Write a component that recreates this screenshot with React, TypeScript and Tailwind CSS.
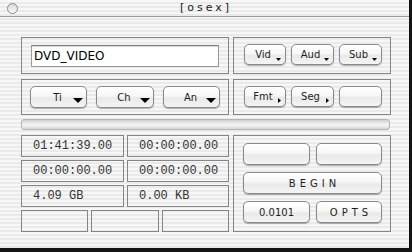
import React from 'react';

// aqua pinstripe + button skins
const stripes =
  'bg-[repeating-linear-gradient(180deg,#f7f7f7_0px,#f7f7f7_2px,#eaeaea_2px,#eaeaea_4px)]';
const btnSkin =
  'rounded-[5px] border border-[#8a8a8a] bg-[linear-gradient(180deg,#ffffff_0%,#f7f7f7_45%,#e9e9e9_55%,#f4f4f4_100%)] shadow-[0_1px_1px_rgba(0,0,0,0.3)]';
const label = "font-['DejaVu_Sans',sans-serif] text-[10px] text-[#1e1e1e]";

type Arrow = 'big' | 'down' | 'right' | 'none';

function AquaButton({
  text = '',
  arrow = 'none',
  className = '',
  textClass = '',
}: {
  text?: string;
  arrow?: Arrow;
  className?: string;
  textClass?: string;
}) {
  return (
    <div className={`relative flex items-center justify-center ${btnSkin} ${className}`}>
      <span className={`${label} ${textClass}`}>{text}</span>
      {arrow === 'big' && (
        <svg className="absolute right-[3px] bottom-[4px]" width="10" height="5" viewBox="0 0 10 5">
          <polygon points="0,0 10,0 5,5" fill="#000" />
        </svg>
      )}
      {arrow === 'down' && (
        <svg className="absolute right-[4px] bottom-[3px]" width="5" height="3" viewBox="0 0 5 3">
          <polygon points="0,0 5,0 2.5,3" fill="#000" />
        </svg>
      )}
      {arrow === 'right' && (
        <svg className="absolute right-[4px] bottom-[3px]" width="3" height="5" viewBox="0 0 3 5">
          <polygon points="0,0 3,2.5 0,5" fill="#000" />
        </svg>
      )}
    </div>
  );
}

function Cell({ text = '', className = '' }: { text?: string; className?: string }) {
  return (
    <div
      className={`flex h-[22px] items-center border border-[#858585] pl-[11px] font-['Liberation_Mono',monospace] text-[12px] text-[#333] ${className}`}
    >
      {text}
    </div>
  );
}

export default function App() {
  return (
    <div className="h-[252px] w-[412px] overflow-hidden bg-[#141414]">
      <div className={`flex h-[248px] w-[409px] flex-col ${stripes}`}>
        {/* title bar */}
        <div className="relative flex h-[17px] items-center justify-center border-b border-[#9c9c9c]">
          <div className="absolute left-[7px] top-[3px] h-[11px] w-[11px] rounded-full border border-[#8a8a8a] bg-[linear-gradient(180deg,#d8d8d8,#fafafa)]" />
          <span className="pl-[3px] font-['DejaVu_Sans',sans-serif] text-[11px] tracking-[3px] text-[#222]">[osex]</span>
        </div>

        <div className="flex flex-col pl-[21px] pt-[20px]">
          {/* top section */}
          <div className="flex gap-[4px]">
            <div className="flex flex-col gap-[5px]">
              <div className="flex h-[37px] w-[208px] items-start border border-[#858585] pl-[9px] pt-[7px]">
                <div className="flex h-[22px] w-[188px] items-center border border-[#9a9a9a] border-t-[#7a7a7a] bg-white pl-[2px] shadow-[inset_0_1px_1px_rgba(0,0,0,0.15)] font-['DejaVu_Sans',sans-serif] text-[12px] text-black">
                  DVD_VIDEO
                </div>
              </div>
              <div className="flex h-[36px] w-[208px] items-start gap-[9px] border border-[#858585] pl-[8px] pt-[6px]">
                <AquaButton text="Ti" arrow="big" className="h-[22px] w-[57px]" textClass="-ml-[2px]" />
                <AquaButton text="Ch" arrow="big" className="h-[22px] w-[58px]" textClass="-ml-[2px]" />
                <AquaButton text="An" arrow="big" className="h-[22px] w-[57px]" textClass="-ml-[2px]" />
              </div>
            </div>
            <div className="flex flex-col gap-[5px]">
              <div className="flex h-[37px] w-[158px] items-start gap-[5px] border border-[#858585] pl-[10px] pt-[6px]">
                <AquaButton text="Vid" arrow="down" className="h-[21px] w-[42px]" textClass="-ml-[4px]" />
                <AquaButton text="Aud" arrow="down" className="h-[21px] w-[43px]" textClass="-ml-[4px]" />
                <AquaButton text="Sub" arrow="down" className="h-[21px] w-[43px]" textClass="-ml-[4px]" />
              </div>
              <div className="flex h-[36px] w-[158px] items-start gap-[5px] border border-[#858585] pl-[10px] pt-[6px]">
                <AquaButton text="Fmt" arrow="right" className="h-[21px] w-[42px]" textClass="-ml-[4px]" />
                <AquaButton text="Seg" arrow="right" className="h-[21px] w-[43px]" textClass="-ml-[4px]" />
                <AquaButton className="h-[21px] w-[43px]" />
              </div>
            </div>
          </div>

          {/* separator bar */}
          <div className="mt-[4px] h-[11px] w-[369px] rounded-[3px] border border-[#b5b5b5] bg-[linear-gradient(180deg,#cfcfcf_0%,#ededed_40%,#f2f2f2_60%,#d6d6d6_100%)]" />

          {/* bottom section */}
          <div className="mt-[5px] flex gap-[3px]">
            <div className="flex w-[208px] flex-col gap-[3px]">
              <div className="flex gap-[3px]">
                <Cell text="01:41:39.00" className="w-[103px]" />
                <Cell text="00:00:00.00" className="w-[102px]" />
              </div>
              <div className="flex gap-[3px]">
                <Cell text="00:00:00.00" className="w-[103px]" />
                <Cell text="00:00:00.00" className="w-[102px]" />
              </div>
              <div className="flex gap-[3px]">
                <Cell text="4.09 GB" className="w-[103px]" />
                <Cell text="0.00 KB" className="w-[102px]" />
              </div>
              <div className="flex gap-[3px]">
                <Cell className="flex-1" />
                <Cell className="flex-1" />
                <Cell className="flex-1" />
              </div>
            </div>
            <div className="ml-[1px] flex h-[97px] w-[158px] flex-col gap-[7px] border border-[#858585] pl-[9px] pt-[7px]">
              <div className="flex gap-[6px]">
                <AquaButton className="h-[22px] w-[67px]" />
                <AquaButton className="h-[22px] w-[66px]" />
              </div>
              <AquaButton text="BEGIN" className="h-[22px] w-[139px]" textClass="tracking-[4px] pl-[4px]" />
              <div className="flex gap-[6px]">
                <AquaButton text="0.0101" className="h-[22px] w-[67px]" />
                <AquaButton text="OPTS" className="h-[22px] w-[66px]" textClass="tracking-[4px] pl-[4px]" />
              </div>
            </div>
          </div>
        </div>
      </div>
    </div>
  );
}
